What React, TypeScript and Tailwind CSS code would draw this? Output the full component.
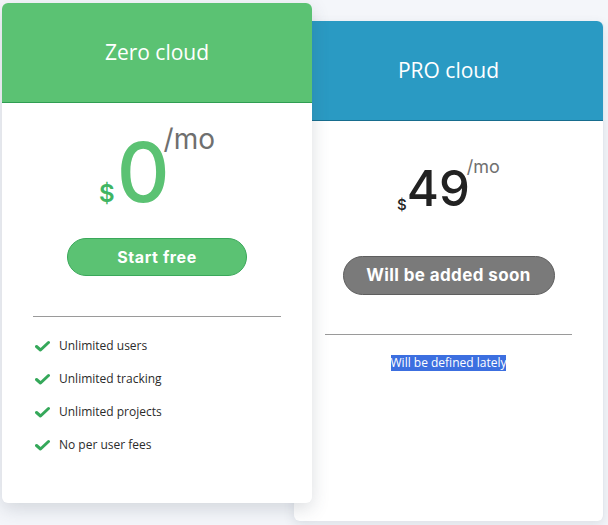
import React from 'react';

const Check = () => (
  <svg width="15" height="12" viewBox="0 0 15 12" className="shrink-0">
    <path d="M1.5 6.5 L5.5 10 L13.5 2.5" fill="none" stroke="#35a85a" strokeWidth="3" strokeLinecap="round" strokeLinejoin="round" />
  </svg>
);

const features = ['Unlimited users', 'Unlimited tracking', 'Unlimited projects', 'No per user fees'];

const App = () => {
  return (
    <div className="w-[608px] h-[525px] bg-[#f4f6fa] overflow-hidden flex items-start pl-[2px] pt-[3px] font-['Open_Sans',sans-serif]">
      {/* free plan */}
      <div className="relative z-10 w-[310px] h-[500px] shrink-0 bg-white rounded-[6px] shadow-[0_6px_18px_rgba(60,70,90,0.18)] flex flex-col">
        <div className="h-[100px] bg-[#5bc273] border-b border-[#2f9d52] rounded-t-[6px] flex items-center justify-center pb-[1px]">
          <span className="text-white text-[21px] font-medium leading-none">Zero cloud</span>
        </div>
        <div className="flex justify-center items-start mt-[29px] font-['Inter',sans-serif] leading-none">
          <span className="text-[#3fb563] text-[24px] font-semibold mt-[50px] mr-[2px]">$</span>
          <span className="text-[#5bc273] text-[82px] font-medium tracking-[-6px]">0</span>
          <span className="text-[#6f6f6f] text-[28px] -mt-[7px]">/mo</span>
        </div>
        <div className="flex justify-center mt-[24px]">
          <button className="w-[180px] h-[38px] rounded-full bg-[#5bc273] border border-[#3aa85a] text-white text-[16px] tracking-[0.6px] font-bold font-['Inter',sans-serif]">
            Start free
          </button>
        </div>
        <div className="mx-[31px] mt-[40px] border-t border-[#9a9a9a]" />
        <ul className="mt-[20px] ml-[33px] flex flex-col gap-[15px]">
          {features.map((f) => (
            <li key={f} className="flex items-center gap-[9px] text-[12px] leading-[18px] text-[#2b2b2b]">
              <Check />
              <span>{f}</span>
            </li>
          ))}
        </ul>
      </div>

      {/* pro plan */}
      <div className="w-[310px] h-[500px] shrink-0 mt-[18px] -ml-[18px] bg-white rounded-[6px] shadow-[0_4px_12px_rgba(60,70,90,0.12)] border-r border-[#e3e7ee] flex flex-col">
        <div className="h-[100px] bg-[#2a9ac3] border-b border-[#176d8e] rounded-t-[6px] flex items-center justify-center">
          <span className="text-white text-[21px] font-medium leading-none">PRO cloud</span>
        </div>
        <div className="flex justify-center items-start mt-[43px] font-['Inter',sans-serif] leading-none">
          <span className="text-[#222] text-[15px] font-medium mt-[33px]">$</span>
          <span className="text-[#222] text-[49px] font-medium">4<span className="tracking-[-3px]">9</span></span>
          <span className="text-[#707070] text-[18px] -mt-[6px]">/mo</span>
        </div>
        <div className="flex justify-center mt-[43px]">
          <button className="w-[212px] h-[39px] rounded-full bg-[#7a7a7a] border border-[#5e5e5e] text-white text-[17px] tracking-[0.4px] font-bold font-['Inter',sans-serif]">
            Will be added soon
          </button>
        </div>
        <div className="mx-[31px] mt-[39px] border-t border-[#9a9a9a]" />
        <div className="flex justify-center mt-[20px]">
          <span className="bg-[#3c6fe0] text-white text-[12px] leading-[16px]">Will be defined lately</span>
        </div>
      </div>
    </div>
  );
};

export default App;
